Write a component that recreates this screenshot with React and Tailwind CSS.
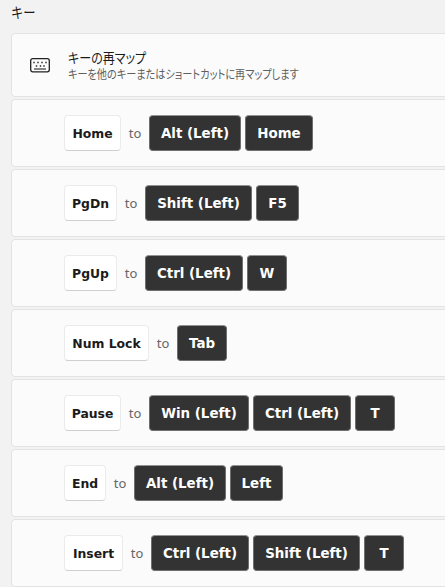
// Keyboard manager: list of remapped keys
const REMAPS = [
  { from: ['Home', 'w-[57px]'], to: [['Alt (Left)', 'w-[92px]'], ['Home', 'w-[68px]']] },
  { from: ['PgDn', 'w-[53px]'], to: [['Shift (Left)', 'w-[107px]'], ['F5', 'w-[43px]']] },
  { from: ['PgUp', 'w-[53px]'], to: [['Ctrl (Left)', 'w-[98px]'], ['W', 'w-[40px]']] },
  { from: ['Num Lock', 'w-[85px]'], to: [['Tab', 'w-[50px]']] },
  { from: ['Pause', 'w-[57px]'], to: [['Win (Left)', 'w-[100px]'], ['Ctrl (Left)', 'w-[98px]'], ['T', 'w-[40px]']] },
  { from: ['End', 'w-[42px]'], to: [['Alt (Left)', 'w-[92px]'], ['Left', 'w-[53px]']] },
  { from: ['Insert', 'w-[59px]'], to: [['Ctrl (Left)', 'w-[98px]'], ['Shift (Left)', 'w-[107px]'], ['T', 'w-[40px]']] },
];

function KeyboardIcon() {
  return (
    <svg width="20" height="15" viewBox="0 0 20 15" fill="none" className="shrink-0">
      <rect x="0.7" y="0.7" width="18.6" height="13.1" rx="2" stroke="#222222" strokeWidth="1.3" />
      <path
        d="M3.3 4.5h1.4M7.3 4.5h1.4M11.3 4.5h1.4M15.3 4.5h1.4M5.8 8h1.4M9.8 8h1.4M13.3 8h1.4"
        stroke="#222222"
        strokeWidth="1.4"
      />
      <path d="M4 11h12" stroke="#444444" strokeWidth="1.3" />
    </svg>
  );
}

function SourceKey({ label, width }) {
  return (
    <span
      className={`flex h-9 shrink-0 items-center justify-center rounded border border-[#ebebeb] border-b-[#cfcfcf] bg-white pt-0.5 text-[12.4px] font-bold whitespace-nowrap text-[#1b1b1b] ${width}`}
    >
      {label}
    </span>
  );
}

function TargetKey({ label, width }) {
  return (
    <span
      className={`flex h-9 shrink-0 items-center justify-center rounded border border-[#6f6f6f] border-t-[#929292] bg-[#333333] pt-0.5 text-[13.4px] font-bold whitespace-nowrap text-white ${width}`}
    >
      {label}
    </span>
  );
}

function RemapRow({ from, to }) {
  return (
    <div className="flex h-[68px] w-[460px] shrink-0 items-center rounded border border-[#e3e3e3] bg-[#fbfbfb] pl-[52px]">
      <SourceKey label={from[0]} width={from[1]} />
      <span className="w-7 shrink-0 pt-px text-center font-['Noto_Sans',sans-serif] text-[13px] text-[#666666]">
        to
      </span>
      <div className="flex gap-1">
        {to.map(([label, width]) => (
          <TargetKey key={label} label={label} width={width} />
        ))}
      </div>
    </div>
  );
}

export default function App() {
  return (
    <div className="h-[587px] w-full overflow-hidden bg-[#f2f2f2] pl-[11px] font-['DejaVu_Sans',sans-serif]">
      <h1 className="flex h-[33px] items-center pb-[7px] font-['Liberation_Sans','Noto_Sans_CJK_JP',sans-serif] text-[15px] text-[#1b1b1b]">
        <span className="inline-block origin-left scale-x-[0.82]">キー</span>
      </h1>

      <div className="flex flex-col gap-0.5">
        {/* Section header */}
        <div className="flex h-16 w-[460px] shrink-0 items-center rounded border border-[#e3e3e3] bg-[#fbfbfb] pl-[18px] font-['Liberation_Sans','Noto_Sans_CJK_JP',sans-serif]">
          <KeyboardIcon />
          <div className="ml-[18px] flex flex-col items-start pt-0.5 whitespace-nowrap [font-feature-settings:'palt']">
            <span className="inline-block origin-left scale-x-[0.86] text-[14px] leading-[17px] text-[#1b1b1b]">
              キーの再マップ
            </span>
            <span className="inline-block origin-left scale-x-[0.845] text-[12px] leading-4 text-[#606060]">
              キーを他のキーまたはショートカットに再マップします
            </span>
          </div>
        </div>

        {REMAPS.map((remap) => (
          <RemapRow key={remap.from[0]} from={remap.from} to={remap.to} />
        ))}
      </div>
    </div>
  );
}
